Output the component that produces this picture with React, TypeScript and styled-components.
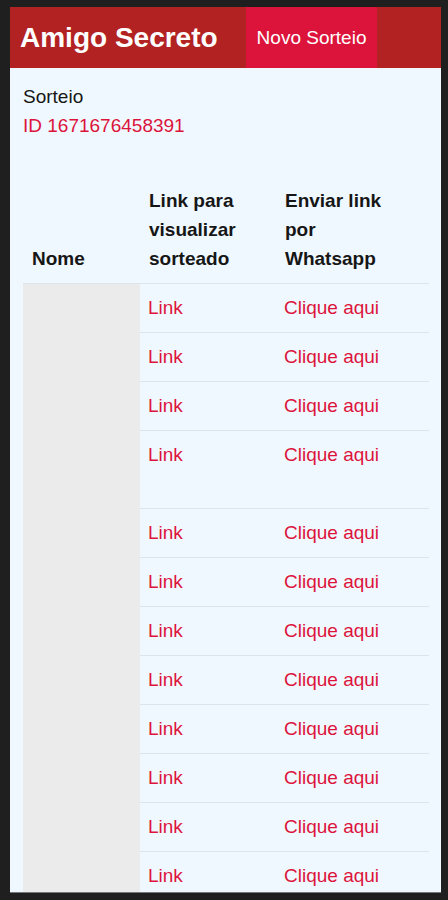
import React from "react";
import styled, { createGlobalStyle } from "styled-components";

const GlobalStyle = createGlobalStyle`
  html, body {
    margin: 0;
    padding: 0;
    background: #1f1f1f;
  }

  * {
    box-sizing: border-box;
  }
`;

const Screen = styled.div`
  width: 448px;
  height: 900px;
  padding: 7px 7px 0 10px;
  background: #1f1f1f;
  overflow: hidden;
`;

const Frame = styled.div`
  width: 431px;
  height: 886px;
  overflow: hidden;
  background: aliceblue;
  border-bottom: 1px solid #777;
  font-family: "Liberation Sans", Arial, sans-serif;
`;

const TopBar = styled.header`
  height: 61px;
  display: flex;
  align-items: stretch;
  background: #b22222;
  padding-left: 10px;
`;

const Title = styled.h1`
  margin: 0;
  display: flex;
  align-items: center;
  font-size: 28px;
  font-weight: 700;
  color: white;
`;

const NewButton = styled.button`
  margin-left: 28px;
  padding: 0 11px;
  border: none;
  background: #dc143c;
  color: white;
  font-family: inherit;
  font-size: 19px;
  cursor: pointer;
`;

const Content = styled.main`
  padding: 14px 12px 0 13px;
`;

const Info = styled.p<{ $accent?: boolean }>`
  margin: 0;
  font-size: 19px;
  line-height: 29px;
  color: ${(p) => (p.$accent ? "#dc143c" : "#161616")};
`;

const Table = styled.table`
  margin-top: 36px;
  width: 406px;
  table-layout: fixed;
  border-collapse: collapse;
  font-size: 19px;
  line-height: 28px;
`;

const HeadCell = styled.th<{ $w: number }>`
  width: ${(p) => p.$w}px;
  padding: 10px 8px 10px 9px;
  text-align: left;
  vertical-align: bottom;
  font-weight: 700;
  line-height: 29px;
  color: #161616;
  border-bottom: 1px solid #dde4ea;
`;

const NameCell = styled.td<{ $tall?: boolean }>`
  height: ${(p) => (p.$tall ? 78 : 49)}px;
  background: #ebebeb;
  border-bottom: 1px solid #ebebeb;
`;

const LinkCell = styled.td`
  padding: 10px 8px;
  vertical-align: top;
  border-bottom: 1px solid #dde4ea;
`;

const RedLink = styled.a`
  color: #dc143c;
  text-decoration: none;
  cursor: pointer;
`;

const rows = [false, false, false, true, false, false, false, false, false, false, false, false];

export default function App() {
  return (
    <>
      <GlobalStyle />
      <Screen>
        <Frame>
          <TopBar>
            <Title>Amigo Secreto</Title>
            <NewButton>Novo Sorteio</NewButton>
          </TopBar>

          <Content>
            <Info>Sorteio</Info>
            <Info $accent>ID 1671676458391</Info>

            <Table>
              <thead>
                <tr>
                  <HeadCell $w={117}>Nome</HeadCell>
                  <HeadCell $w={136}>
                    Link para
                    <br />
                    visualizar
                    <br />
                    sorteado
                  </HeadCell>
                  <HeadCell $w={153}>
                    Enviar link
                    <br />
                    por
                    <br />
                    Whatsapp
                  </HeadCell>
                </tr>
              </thead>
              <tbody>
                {rows.map((tall, i) => (
                  <tr key={i}>
                    <NameCell $tall={tall} />
                    <LinkCell>
                      <RedLink>Link</RedLink>
                    </LinkCell>
                    <LinkCell>
                      <RedLink>Clique aqui</RedLink>
                    </LinkCell>
                  </tr>
                ))}
              </tbody>
            </Table>
          </Content>
        </Frame>
      </Screen>
    </>
  );
}
